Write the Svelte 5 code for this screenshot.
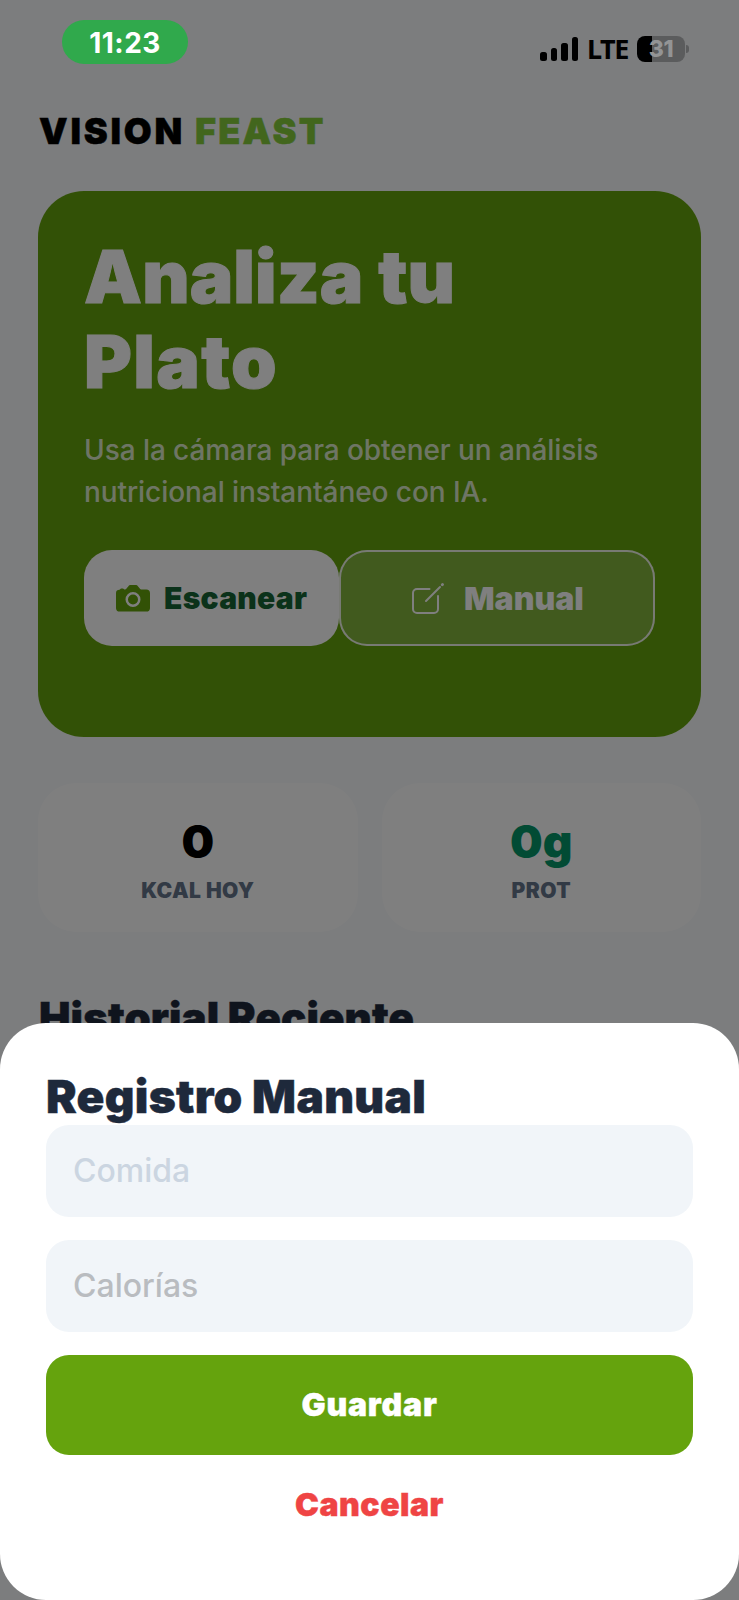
<script lang="ts">
  let meal = $state('');
  let calories = $state('');

  const bars = [9, 13, 18, 24];

  const stats = [
    { value: '0', label: 'KCAL HOY', accent: false },
    { value: '0g', label: 'PROT', accent: true },
  ];
</script>

<div class="screen">
  <main class="home">
    <h1 class="brand">VISION <span>FEAST</span></h1>

    <section class="hero">
      <h2>Analiza tu<br /><span>Plato</span></h2>
      <p>Usa la cámara para obtener un análisis<br />nutricional instantáneo con IA.</p>
      <div class="actions">
        <button class="scan">
          <svg width="34" height="27" viewBox="0 0 34 27">
            <path
              fill="#65a30d"
              fill-rule="evenodd"
              d="M3.5 4.8 5 3.400h2l1.400 1.200c1 0 1.600-.4 2.100-1l1.700-2.200C12.900.5 13.700 0 14.800 0h4.700c1.100 0 1.900.5 2.600 1.400l1.700 2.200c.5.6 1 1 1.900 1h4.800C32.600 4.600 34 6 34 8v15.200c0 2-1.400 3.400-3.500 3.400h-27C1.400 26.600 0 25.200 0 23.200V8c0-2 1.400-3.200 3.500-3.200ZM17 7a7.500 7.500 0 1 0 0 15 7.500 7.500 0 0 0 0-15Zm0 2.500a5 5 0 1 1 0 10 5 5 0 0 1 0-10Z"
            />
          </svg>
          Escanear
        </button>
        <button class="manual">
          <svg width="32" height="32" viewBox="0 0 32 32" fill="none" stroke="#fff" stroke-width="2" stroke-linecap="round">
            <path d="M17.500 6H5a4 4 0 0 0-4 4v16a4 4 0 0 0 4 4h17a4 4 0 0 0 4-4V13" />
            <path d="M14 18 28 4" />
            <path d="M30.300 1.700l.2-.2" stroke-width="2.800" />
          </svg>
          Manual
        </button>
      </div>
    </section>

    <section class="stats">
      {#each stats as stat}
        <div class="stat">
          <strong class:accent={stat.accent}>{stat.value}</strong>
          <span>{stat.label}</span>
        </div>
      {/each}
    </section>

    <h3 class="history">Historial Reciente</h3>
  </main>

  <div class="overlay">
    <form class="sheet">
      <h2>Registro Manual</h2>
      <input class="meal" placeholder="Comida" bind:value={meal} />
      <input class="calories" placeholder="Calorías" bind:value={calories} />
      <button type="button" class="save">Guardar</button>
      <button type="button" class="cancel">Cancelar</button>
    </form>
  </div>

  <header class="statusbar">
    <span class="clock">11:23</span>
    <div class="indicators">
      <div class="signal">
        {#each bars as h}
          <i style="height: {h}px"></i>
        {/each}
      </div>
      <span class="network">LTE</span>
      <div class="battery"><span>31</span></div>
    </div>
  </header>
</div>

<style>
  :global(body) {
    margin: 0;
    background: #f8fafc;
  }

  .screen {
    position: relative;
    width: 739px;
    height: 1600px;
    overflow: hidden;
    background: #f8fafc;
    font-family: Inter, 'Liberation Sans', sans-serif;
  }

  h1,
  h2,
  h3,
  p {
    margin: 0;
  }

  button,
  input {
    box-sizing: border-box;
    border: 0;
    padding: 0;
    font-family: inherit;
  }

  .statusbar {
    position: absolute;
    top: 0;
    left: 0;
    right: 0;
    display: flex;
    justify-content: space-between;
    align-items: flex-start;
    padding: 20px 54px 0 62px;
  }

  .clock {
    width: 126px;
    height: 44px;
    border-radius: 22px;
    background: #30a94c;
    color: #fff;
    font-size: 28px;
    font-weight: 700;
    line-height: 46px;
    letter-spacing: 0.5px;
    text-align: center;
  }

  .indicators {
    display: flex;
    align-items: center;
    height: 26px;
    margin-top: 16px;
  }

  .signal {
    display: flex;
    align-items: flex-end;
    gap: 4px;
    height: 24px;
  }

  .signal i {
    width: 6.5px;
    border-radius: 2.5px;
    background: #000;
  }

  .network {
    width: 40px;
    margin-left: 9px;
    color: #000;
    font-family: 'Noto Sans', Inter, sans-serif;
    font-size: 27px;
    font-weight: 700;
    line-height: 28px;
    letter-spacing: -1.5px;
  }

  .battery {
    position: relative;
    width: 48px;
    height: 26px;
    margin-left: 10px;
    border-radius: 8px;
    background: linear-gradient(90deg, #000 15px, #5b5c5d 15px);
    color: #939495;
    font-size: 23px;
    font-weight: 800;
    line-height: 26px;
    letter-spacing: -0.5px;
    text-align: center;
  }

  .battery::after {
    content: '';
    position: absolute;
    top: 9px;
    right: -4px;
    width: 3px;
    height: 8px;
    border-radius: 0 4px 4px 0;
    background: #5b5c5d;
  }

  .home {
    padding: 109px 38px 0;
  }

  .brand {
    padding-left: 1px;
    color: #000;
    font-size: 36px;
    font-weight: 900;
    line-height: 44px;
    letter-spacing: 2.8px;
    white-space: nowrap;
    -webkit-text-stroke: 0.5px;
  }

  .brand span {
    color: #84cc3a;
    letter-spacing: 2.3px;
  }

  .hero {
    box-sizing: border-box;
    height: 546px;
    margin-top: 38px;
    padding: 43px 46px 0;
    border-radius: 46px;
    background: #65a30d;
    color: #fff;
  }

  .hero h2 {
    font-size: 73px;
    font-weight: 900;
    line-height: 85px;
    letter-spacing: 0.1px;
    white-space: nowrap;
    -webkit-text-stroke: 1px;
  }

  .hero h2 span {
    letter-spacing: 1.4px;
  }

  .hero p {
    margin-top: 25px;
    color: rgba(255, 255, 255, 0.8);
    font-size: 28px;
    font-weight: 500;
    line-height: 42px;
    letter-spacing: -0.07px;
    white-space: nowrap;
  }

  .actions {
    display: flex;
    margin-top: 37px;
  }

  .actions button {
    display: flex;
    align-items: center;
    height: 96px;
    border-radius: 28px;
  }

  .scan {
    width: 255px;
    padding-left: 32px;
    gap: 14px;
    background: #fff;
    color: #166534;
    font-size: 30px;
    font-weight: 900;
    letter-spacing: 0.25px;
  }

  .manual {
    width: 316px;
    padding-left: 73px;
    gap: 20px;
    background: #82b53d;
    box-shadow: inset 0 0 0 2px #f0f5e8;
    color: #fff;
    font-size: 32px;
    font-weight: 900;
  }

  .manual svg {
    margin-top: 2px;
  }

  .stats {
    display: flex;
    gap: 24px;
    margin-top: 46px;
  }

  .stat {
    display: flex;
    flex: 1;
    flex-direction: column;
    align-items: center;
    box-sizing: border-box;
    height: 149px;
    padding-top: 30px;
    border-radius: 38px;
    background: #fff;
  }

  .stat strong {
    color: #000;
    font-size: 46px;
    font-weight: 900;
    line-height: 56px;
  }

  .stat .accent {
    color: #059669;
  }

  .stat span {
    margin-top: 9px;
    color: #64748b;
    font-size: 21px;
    font-weight: 900;
    line-height: 26px;
    letter-spacing: 0.4px;
  }

  .history {
    margin-top: 60px;
    padding-left: 1px;
    color: #1e293b;
    font-size: 42px;
    font-weight: 900;
    line-height: 52px;
    letter-spacing: 0.1px;
    white-space: nowrap;
    -webkit-text-stroke: 0.5px;
  }

  .overlay {
    position: absolute;
    inset: 0;
    display: flex;
    align-items: flex-end;
    background: rgba(0, 0, 0, 0.5);
  }

  .sheet {
    display: flex;
    flex-direction: column;
    box-sizing: border-box;
    width: 100%;
    height: 577px;
    padding: 46px 46px 0;
    border-radius: 46px;
    background: #fff;
  }

  .sheet h2 {
    height: 56px;
    color: #1e293b;
    font-size: 46px;
    font-weight: 900;
    line-height: 55px;
    letter-spacing: 0.3px;
    white-space: nowrap;
    -webkit-text-stroke: 0.5px;
  }

  .sheet input {
    height: 92px;
    padding: 0 27px 1px;
    border-radius: 23px;
    background: #f1f5f9;
    font-size: 32px;
    font-weight: 500;
  }

  .meal::placeholder {
    color: #cbd5e1;
    opacity: 1;
  }

  .calories {
    margin-top: 23px;
  }

  .calories::placeholder {
    color: #b9bcc0;
    opacity: 1;
  }

  .save,
  .cancel {
    height: 100px;
    padding-bottom: 1px;
    border-radius: 23px;
    background: #65a30d;
    color: #fff;
    font-size: 32px;
    font-weight: 900;
    letter-spacing: 0.8px;
    -webkit-text-stroke: 0.4px;
  }

  .save {
    margin-top: 23px;
  }

  .cancel {
    background: none;
    color: #ef4444;
    letter-spacing: 0.5px;
  }
</style>
